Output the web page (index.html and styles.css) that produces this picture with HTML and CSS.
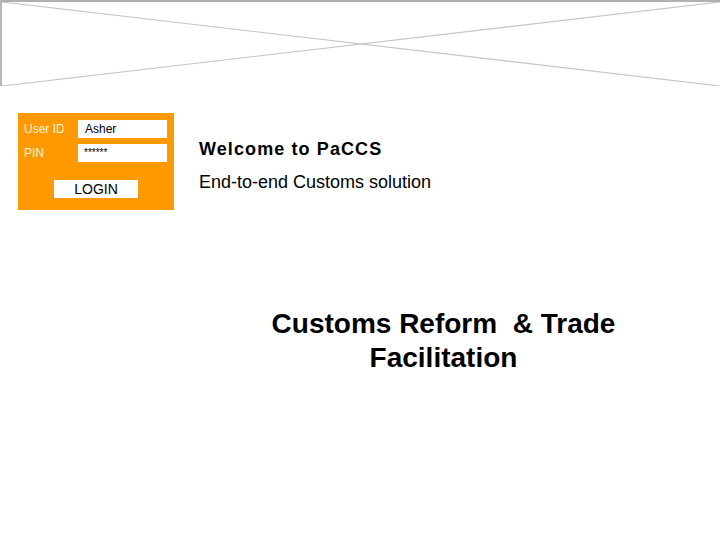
FILE: index.html
```html
<!DOCTYPE html>
<html lang="en">
<head>
    <meta charset="UTF-8">
    <meta name="viewport" content="width=device-width, initial-scale=1.0">
    <title>PaCCS</title>
    <link rel="stylesheet" href="styles.css">
</head>
<body>
    <div class="banner">
        <svg class="banner-x" viewBox="0 0 720 86" preserveAspectRatio="none">
            <line x1="0" y1="0" x2="720" y2="86"></line>
            <line x1="0" y1="86" x2="720" y2="0"></line>
        </svg>
    </div>

    <div class="top-row">
        <form class="login-panel">
            <label class="login-label">User ID</label>
            <div class="login-field">Asher</div>
            <label class="login-label">PIN</label>
            <div class="login-field pin">******</div>
            <button type="button" class="login-btn">LOGIN</button>
        </form>

        <div class="intro">
            <h1 class="welcome">Welcome to PaCCS</h1>
            <p class="subtitle">End-to-end Customs solution</p>
        </div>
    </div>

    <h2 class="tagline">Customs Reform  &amp; Trade<br>Facilitation</h2>
</body>
</html>
```

FILE: styles.css
```css
body{
    margin: 0;
    background-color: #ffffff;
    font-family: "Liberation Sans", Arial, sans-serif;
    color: #000000;
}

.banner{
    height: 86px;
    border-top: 2px solid #b0b0b0;
    border-left: 2px solid #b8b8b8;
    box-sizing: border-box;
}

.banner-x{
    display: block;
    width: 100%;
    height: 100%;
}

.banner-x line{
    stroke: #c4c4c4;
    stroke-width: 1.2;
}

.top-row{
    display: flex;
    gap: 25px;
    margin-top: 27px;
    padding-left: 18px;
}

.login-panel{
    display: grid;
    grid-template-columns: 54px 89px;
    grid-template-rows: 18px 18px 30px;
    row-gap: 6px;
    align-items: center;
    width: 156px;
    height: 97px;
    box-sizing: border-box;
    padding: 7px 7px 12px 6px;
    margin: 0;
    background-color: #ff9900;
}

.login-label{
    font-size: 12px;
    color: #fff3dc;
}

.login-field{
    height: 18px;
    line-height: 18px;
    padding-left: 7px;
    font-size: 12px;
    background-color: #ffffff;
}

.login-field.pin{
    padding-left: 6px;
    font-size: 10px;
}

.login-btn{
    grid-column: 1 / 3;
    justify-self: center;
    align-self: end;
    margin-left: 1px;
    width: 84px;
    height: 18px;
    padding: 0;
    border: 0;
    font-family: "Liberation Sans", Arial, sans-serif;
    font-size: 14px;
    line-height: 18px;
    color: #000000;
    background-color: #ffffff;
}

.welcome{
    margin: 25px 0 0;
    font-size: 18px;
    line-height: 22px;
    letter-spacing: 1.1px;
    font-weight: bold;
}

.subtitle{
    margin: 11px 0 0;
    font-size: 18px;
    line-height: 22px;
}

.tagline{
    margin: 97px 0 0;
    padding-left: 167px;
    font-size: 28px;
    line-height: 34px;
    font-weight: bold;
    text-align: center;
    white-space: pre;
}
```
